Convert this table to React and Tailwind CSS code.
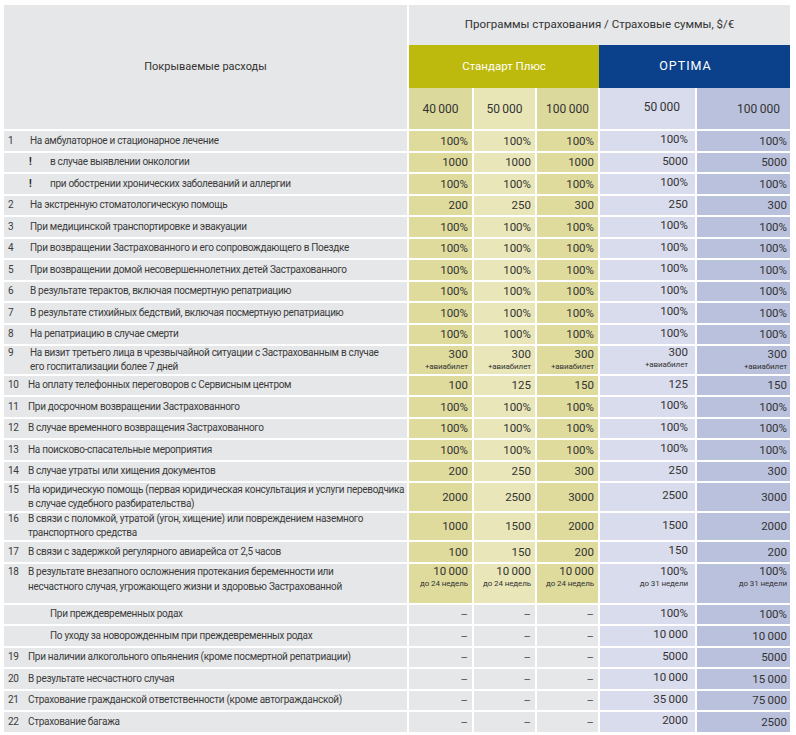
import React from 'react'

const P = '100%'
const D = '–'
const all = [P, P, P]
const none = [D, D, D]
const air = { v: '300', note: '+авиабилет' }

const rows = [
  { n: '1', text: ['На амбулаторное и стационарное лечение'], std: all, opt: [P, P] },
  { mark: true, text: ['в случае выявлении онкологии'], std: ['1000', '1000', '1000'], opt: ['5000', '5000'] },
  { mark: true, text: ['при обострении хронических заболеваний и аллергии'], std: all, opt: [P, P] },
  { n: '2', text: ['На экстренную стоматологическую помощь'], std: ['200', '250', '300'], opt: ['250', '300'] },
  { n: '3', text: ['При медицинской транспортировке и эвакуации'], std: all, opt: [P, P] },
  { n: '4', text: ['При возвращении Застрахованного и его сопровождающего в Поездке'], std: all, opt: [P, P] },
  { n: '5', text: ['При возвращении домой несовершеннолетних детей Застрахованного'], std: all, opt: [P, P] },
  { n: '6', text: ['В результате терактов, включая посмертную репатриацию'], std: all, opt: [P, P] },
  { n: '7', text: ['В результате стихийных бедствий, включая посмертную репатриацию'], std: all, opt: [P, P] },
  { n: '8', text: ['На репатриацию в случае смерти'], std: all, opt: [P, P] },
  {
    n: '9',
    h: 'h-[27.5px]',
    text: ['На визит третьего лица в чрезвычайной ситуации с Застрахованным в случае', 'его госпитализации более 7 дней'],
    std: [air, air, air],
    opt: [air, air],
  },
  { n: '10', text: ['На оплату телефонных переговоров с Сервисным центром'], std: ['100', '125', '150'], opt: ['125', '150'] },
  { n: '11', text: ['При досрочном возвращении Застрахованного'], std: all, opt: [P, P] },
  { n: '12', text: ['В случае временного возвращения Застрахованного'], std: all, opt: [P, P] },
  { n: '13', text: ['На поисково-спасательные мероприятия'], std: all, opt: [P, P] },
  { n: '14', text: ['В случае утраты или хищения документов'], std: ['200', '250', '300'], opt: ['250', '300'] },
  {
    n: '15',
    h: 'h-[27.5px]',
    text: ['На юридическую помощь (первая юридическая консультация и услуги переводчика', 'в случае судебного разбирательства)'],
    std: ['2000', '2500', '3000'],
    opt: ['2500', '3000'],
  },
  {
    n: '16',
    h: 'h-[27.5px]',
    text: ['В связи с поломкой, утратой (угон, хищение) или повреждением наземного', 'транспортного средства'],
    std: ['1000', '1500', '2000'],
    opt: ['1500', '2000'],
  },
  { n: '17', text: ['В связи с задержкой регулярного авиарейса от 2,5 часов'], std: ['100', '150', '200'], opt: ['150', '200'] },
  {
    n: '18',
    h: 'h-[39px]',
    top: true,
    text: ['В результате внезапного осложнения протекания беременности или', 'несчастного случая, угрожающего жизни и здоровью Застрахованной'],
    std: [
      { v: '10\u2009000', note: 'до 24 недель' },
      { v: '10\u2009000', note: 'до 24 недель' },
      { v: '10\u2009000', note: 'до 24 недель' },
    ],
    opt: [
      { v: '100%', note: 'до 31 недели' },
      { v: '100%', note: 'до 31 недели' },
    ],
  },
  { sub: true, text: ['При преждевременных родах'], std: none, opt: [P, P] },
  { sub: true, text: ['По уходу за новорожденным при преждевременных родах'], std: none, opt: ['10\u2009000', '10\u2009000'] },
  { n: '19', text: ['При наличии алкогольного опьянения (кроме посмертной репатриации)'], std: none, opt: ['5000', '5000'] },
  { n: '20', text: ['В результате несчастного случая'], std: none, opt: ['10\u2009000', '15\u2009000'] },
  { n: '21', text: ['Страхование гражданской ответственности (кроме автогражданской)'], std: none, opt: ['35\u2009000', '75\u2009000'] },
  { n: '22', text: ['Страхование багажа'], std: none, opt: ['2000', '2500'] },
]

const stdBg = ['bg-[#dedb9d]', 'bg-[#e9e7b9]', 'bg-[#dedb9d]']
const optBg = ['bg-[#d9dcec]', 'bg-[#bac1dd]']
const optPad = ['pr-[7px] pb-[3px]', 'pr-[3px]']

const Value = ({ value }) => {
  if (typeof value === 'string') return <span className="leading-[14px]">{value}</span>
  return (
    <div className="flex flex-col items-end">
      <span className="leading-[13px]">{value.v}</span>
      <span className="text-[8px] leading-[10px] mt-[1px] tracking-[-0.1px]">{value.note}</span>
    </div>
  )
}

const Row = ({ row }) => {
  const h = row.h || 'h-[19.5px]'
  const align = row.top ? 'items-start pt-[1px]' : 'items-center'
  const dashed = row.std[0] === D
  return (
    <div className="grid grid-cols-[403px_63px_61px_61px_95px_93px] gap-x-[2px]">
      <div className={`${h} bg-[#e6e7e8] flex ${row.top ? 'items-start' : 'items-center'} pl-[4px] text-[10px] tracking-[-0.3px] text-[#3b3b3b]`}>
        <div className={`flex items-start whitespace-nowrap ${row.top ? 'leading-[15px]' : 'leading-[14px]'}`}>
          {row.n && <span className={row.n.length > 1 ? 'w-[20px] shrink-0' : 'w-[22px] shrink-0'}>{row.n}</span>}
          {row.mark && <span className="w-[42px] shrink-0 pl-[21px] font-bold text-[#222]">!</span>}
          {row.sub && <span className="w-[42px] shrink-0" />}
          <div>
            {row.text.map((t) => (
              <div key={t}>{t}</div>
            ))}
          </div>
        </div>
      </div>
      {row.std.map((v, i) => (
        <div
          key={'s' + i}
          className={`${h} ${dashed ? 'bg-[#e6e7e8] text-[#555]' : stdBg[i] + ' text-[#333]'} flex ${align} justify-end pr-[4px] text-[11.5px]`}
        >
          <Value value={v} />
        </div>
      ))}
      {row.opt.map((v, i) => (
        <div key={'o' + i} className={`${h} ${optBg[i]} ${optPad[i]} flex ${align} justify-end text-[11.5px] text-[#333]`}>
          <Value value={v} />
        </div>
      ))}
    </div>
  )
}

const App = () => {
  return (
    <div className="min-h-screen bg-white font-['Roboto',sans-serif]">
      <div className="pt-[5px] pl-[4px] w-[790px]">
        {/* Header */}
        <div className="flex gap-x-[2px]">
          <div className="w-[403px] h-[124px] bg-[#e6e7e8] flex items-center justify-center text-[11px] text-[#333]">
            Покрываемые расходы
          </div>
          <div className="w-[381px] flex flex-col">
            <div className="h-[40px] bg-[#e6e7e8] flex items-center justify-center text-[11.5px] text-[#333]">
              Программы страхования / Страховые суммы, $/€
            </div>
            <div className="h-[43px] flex">
              <div className="w-[190px] bg-[#bdb90d] flex items-center justify-center text-[11.5px] text-white">
                Стандарт Плюс
              </div>
              <div className="flex-1 bg-[#0b418a] flex items-center justify-center pr-[18px] text-[12.5px] tracking-[1px] text-white">
                OPTIMA
              </div>
            </div>
            <div className="h-[41px] grid grid-cols-[63px_61px_61px_95px_93px] gap-x-[2px] text-[12px] text-[#333]">
              <div className="bg-[#dcd99c] flex items-center justify-center">40{'\u2009'}000</div>
              <div className="bg-[#e8e6b6] flex items-center justify-center">50{'\u2009'}000</div>
              <div className="bg-[#dcd99c] flex items-center justify-center">100{'\u2009'}000</div>
              <div className="bg-[#d9dcec] flex items-center justify-end pr-[15px] pb-[3px]">50{'\u2009'}000</div>
              <div className="bg-[#bac1dd] flex items-center justify-end pr-[10px]">100{'\u2009'}000</div>
            </div>
          </div>
        </div>

        {/* Body */}
        <div className="flex flex-col gap-y-[2px] mt-[2px]">
          {rows.map((row, i) => (
            <Row key={i} row={row} />
          ))}
        </div>
      </div>
    </div>
  )
}

export default App
